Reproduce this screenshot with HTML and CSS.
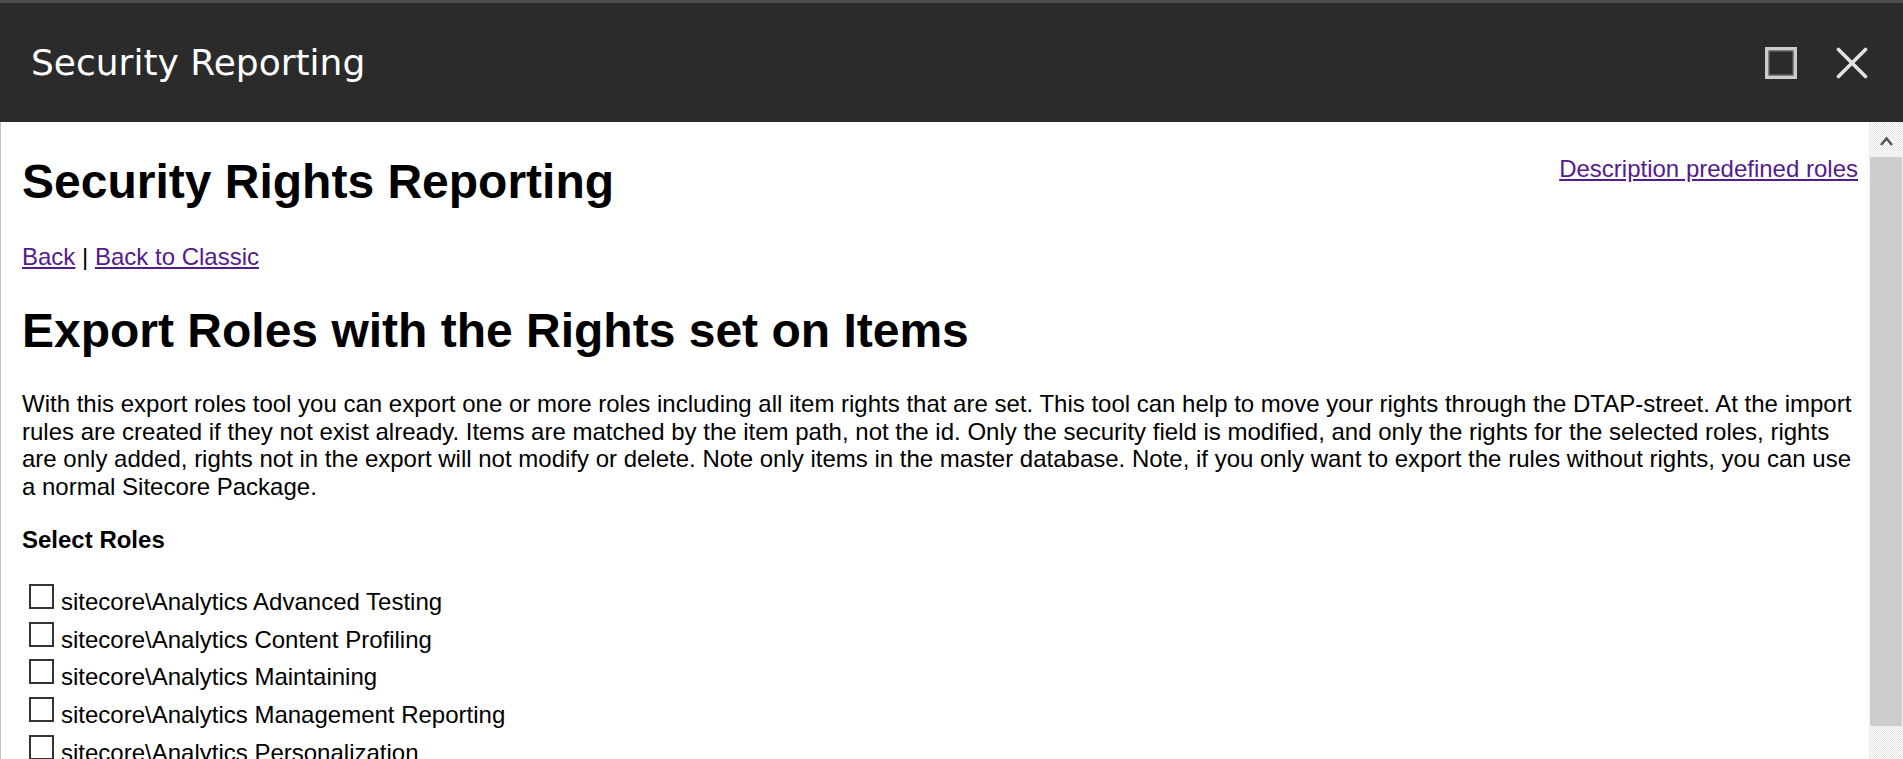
FILE: index.html
```html
<!DOCTYPE html>
<html lang="en">
<head>
<meta charset="utf-8">
<title>Security Reporting</title>
<link rel="stylesheet" href="styles.css">
</head>
<body>
<div class="window">
  <header class="titlebar">
    <div class="title">Security Reporting</div>
    <div class="controls">
      <svg class="ctl" width="32" height="32" viewBox="0 0 32 32" aria-label="Maximize">
        <rect x="1.75" y="1.75" width="28.5" height="28.5" fill="none" stroke="#cccccc" stroke-width="3.5"/>
        <rect x="4" y="4" width="24" height="24" fill="none" stroke="#7d7d7d" stroke-width="1"/>
      </svg>
      <svg class="ctl" width="32" height="32" viewBox="0 0 32 32" aria-label="Close">
        <path d="M2.5 2.5 L29.5 29.5 M29.5 2.5 L2.5 29.5" stroke="#e2e2e2" stroke-width="3.6" stroke-linecap="round"/>
      </svg>
    </div>
  </header>
  <div class="pane">
    <main class="content">
      <div class="head-row">
        <h1 class="page-title">Security Rights Reporting</h1>
        <a class="link desc-link" href="#">Description predefined roles</a>
      </div>
      <p class="nav"><a class="link" href="#">Back</a> | <a class="link" href="#">Back to Classic</a></p>
      <h1 class="section-title">Export Roles with the Rights set on Items</h1>
      <p class="intro">With this export roles tool you can export one or more roles including all item rights that are set. This tool can help to move your rights through the DTAP-street. At the import rules are created if they not exist already. Items are matched by the item path, not the id. Only the security field is modified, and only the rights for the selected roles, rights are only added, rights not in the export will not modify or delete. Note only items in the master database. Note, if you only want to export the rules without rights, you can use a normal Sitecore Package.</p>
      <div class="select-label">Select Roles</div>
      <div class="roles">
        <label class="role"><input type="checkbox" class="cb">sitecore\Analytics Advanced Testing</label>
        <label class="role"><input type="checkbox" class="cb">sitecore\Analytics Content Profiling</label>
        <label class="role"><input type="checkbox" class="cb">sitecore\Analytics Maintaining</label>
        <label class="role"><input type="checkbox" class="cb">sitecore\Analytics Management Reporting</label>
        <label class="role"><input type="checkbox" class="cb">sitecore\Analytics Personalization</label>
      </div>
    </main>
    <div class="scrollbar">
      <div class="sb-up">
        <svg width="34" height="34" viewBox="0 0 34 34"><path d="M12 23 L17.5 16.5 L23 23" fill="none" stroke="#555555" stroke-width="2.6"/></svg>
      </div>
      <div class="sb-thumb"></div>
      <div class="sb-track"></div>
    </div>
  </div>
</div>
</body>
</html>
```

FILE: styles.css
```css
html, body {
  margin: 0;
  padding: 0;
  height: 759px;
  overflow: hidden;
  background: #ffffff;
}

.window {
  display: flex;
  flex-direction: column;
  height: 759px;
}

.titlebar {
  flex: 0 0 auto;
  height: 119px;
  border-top: 3px solid #4e4e4e;
  background: #2b2b2b;
  display: flex;
  align-items: center;
  justify-content: space-between;
  padding: 0 35px 0 31px;
}

.title {
  font-family: "DejaVu Sans", sans-serif;
  font-size: 36px;
  line-height: 42px;
  color: #ffffff;
}

.controls {
  display: flex;
  gap: 39px;
  align-items: center;
}

.ctl {
  display: block;
}

.pane {
  flex: 1 1 auto;
  display: flex;
  min-height: 0;
}

.content {
  flex: 1 1 auto;
  border-left: 1px solid #c4c4c4;
  padding: 32px 11px 0 21px;
  font-family: "Liberation Sans", Arial, sans-serif;
  font-size: 24px;
  line-height: 27.6px;
  color: #000000;
  overflow: hidden;
}

.head-row {
  display: flex;
  justify-content: space-between;
  align-items: flex-start;
}

.page-title,
.section-title {
  margin: 0;
  font-size: 48px;
  line-height: 55.2px;
  font-weight: bold;
}

.link {
  color: #551a8b;
  text-decoration: underline;
}

.desc-link {
  margin-top: 1px;
}

.nav {
  margin: 34px 0 0 0;
}

.section-title {
  margin-top: 32px;
}

.intro {
  margin: 32px 0 0 0;
}

.select-label {
  margin-top: 26px;
  font-weight: bold;
}

.roles {
  margin-top: 29px;
}

.role {
  display: block;
  height: 37.7px;
  line-height: 37.7px;
  white-space: nowrap;
}

.cb {
  -webkit-appearance: none;
  appearance: none;
  display: inline-block;
  box-sizing: border-box;
  width: 25px;
  height: 25px;
  margin: 0 7px 1px 7px;
  border: 2px solid #333333;
  background: #ffffff;
  vertical-align: baseline;
}

.scrollbar {
  flex: 0 0 34px;
  width: 34px;
  display: flex;
  flex-direction: column;
  background: repeating-conic-gradient(#e4e4e4 0 25%, #ffffff 0 50%) 0 0 / 2px 2px;
}

.sb-up {
  height: 35px;
  flex: 0 0 35px;
}

.sb-up svg {
  display: block;
}

.sb-thumb {
  flex: 0 0 569px;
  margin: 0 1px 0 1px;
  background: #cdcdcd;
}

.sb-track {
  flex: 1 1 auto;
}
```
